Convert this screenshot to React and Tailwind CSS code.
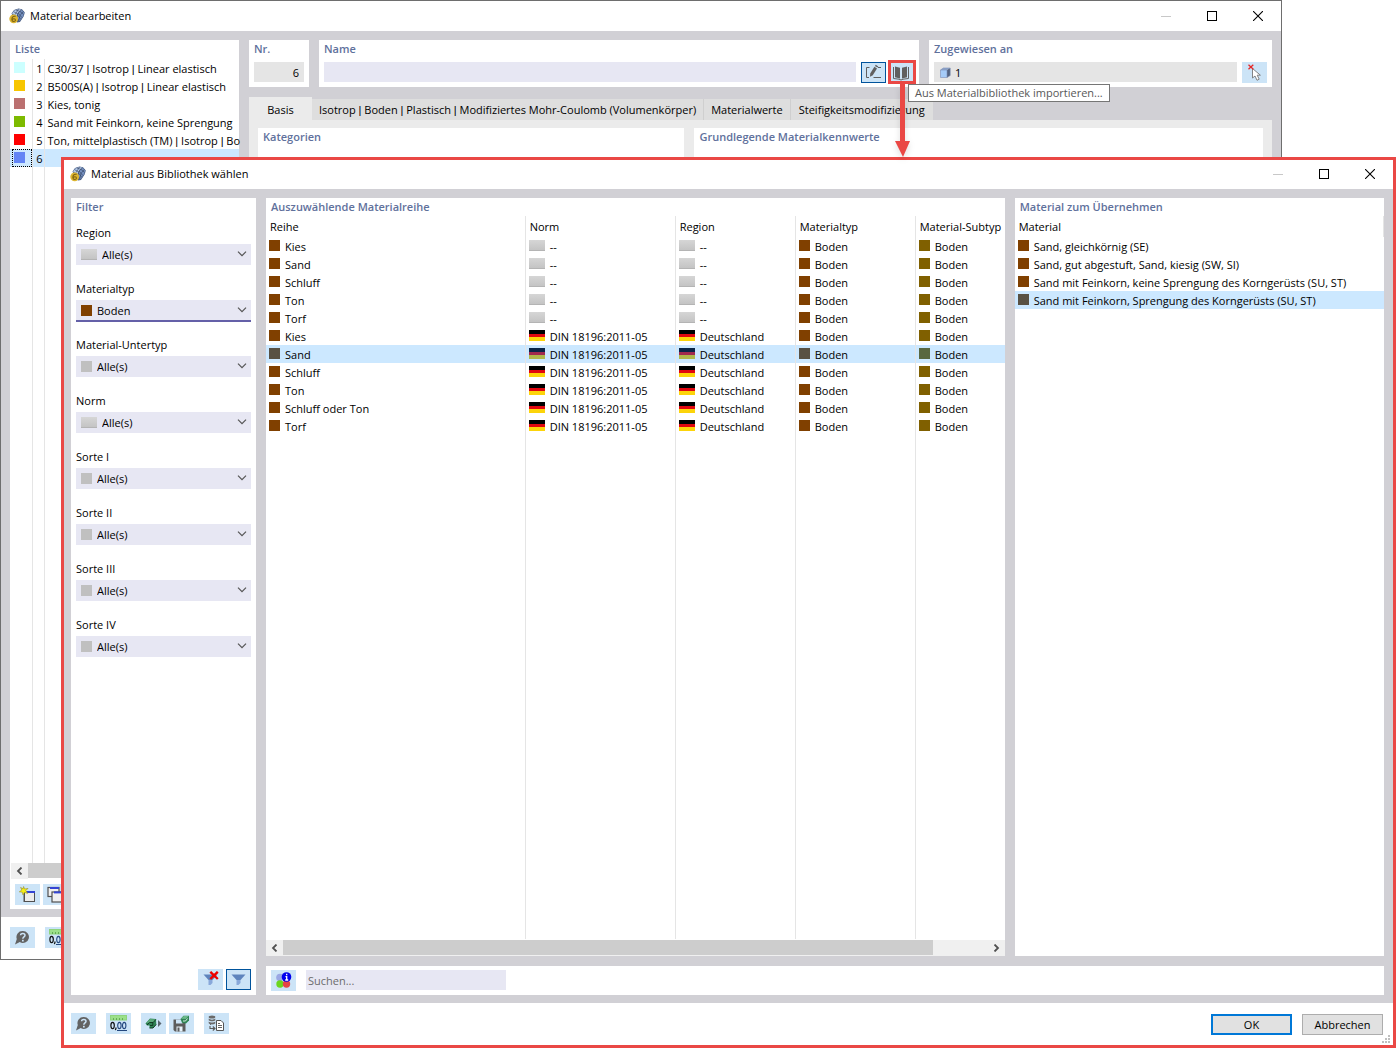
import React from "react";

const materials = [
  { nr: 1, color: "#ccffff", name: "C30/37 | Isotrop | Linear elastisch" },
  { nr: 2, color: "#f7c600", name: "B500S(A) | Isotrop | Linear elastisch" },
  { nr: 3, color: "#bb7070", name: "Kies, tonig" },
  { nr: 4, color: "#7dba00", name: "Sand mit Feinkorn, keine Sprengung" },
  { nr: 5, color: "#ff0000", name: "Ton, mittelplastisch (TM) | Isotrop | Bo" },
  { nr: 6, color: "#6384f5", name: "", selected: true },
];

const filters = [
  { label: "Region", value: "Alle(s)", icon: "wide" },
  { label: "Materialtyp", value: "Boden", icon: "soil", active: true },
  { label: "Material-Untertyp", value: "Alle(s)", icon: "square" },
  { label: "Norm", value: "Alle(s)", icon: "wide" },
  { label: "Sorte I", value: "Alle(s)", icon: "square" },
  { label: "Sorte II", value: "Alle(s)", icon: "square" },
  { label: "Sorte III", value: "Alle(s)", icon: "square" },
  { label: "Sorte IV", value: "Alle(s)", icon: "square" },
];

const series = [
  { name: "Kies" },
  { name: "Sand" },
  { name: "Schluff" },
  { name: "Ton" },
  { name: "Torf" },
  { name: "Kies", din: true },
  { name: "Sand", din: true, selected: true },
  { name: "Schluff", din: true },
  { name: "Ton", din: true },
  { name: "Schluff oder Ton", din: true },
  { name: "Torf", din: true },
];

const results = [
  { name: "Sand, gleichkörnig (SE)" },
  { name: "Sand, gut abgestuft, Sand, kiesig (SW, SI)" },
  { name: "Sand mit Feinkorn, keine Sprengung des Korngerüsts (SU, ST)" },
  { name: "Sand mit Feinkorn, Sprengung des Korngerüsts (SU, ST)", selected: true },
];

function AppIcon() {
  return (
    <svg width="16" height="16" viewBox="0 0 16 16" aria-hidden="true">
      <path d="M2.5 5.5 L5 2 L9.5 0.5 L13 1.2 L15.8 4.5 L14.6 8.5 L11 14 L8 14.5 L5 10 Z" fill="#4a5f86" />
      <path d="M3 5.5 L5.4 2.4 L9.6 1 L12.6 1.8 L9 5 L7.5 8.5 Z" fill="#b3c8e8" />
      <path d="M9 5 L12.6 1.8 L15.2 4.8 L14 8.3 L10.6 13 L8 9 Z" fill="#7590bf" />
      <path d="M4.6 3.7 L8.6 5.8 M6.6 2 L11 3.4 M9 5 L13 9.6 M11 3.4 L14.6 6.4 M8.4 7 L12 11.4 M9.6 1 L6 6.6 M12.6 1.8 L9 5 L8 9 M14.4 3.4 L11 7.4 L10 12" stroke="#33425f" strokeWidth="0.6" fill="none" />
      <circle cx="4.7" cy="10.8" r="4.4" fill="#dcb531" />
      <path d="M6.6 8.4 C4 7.6 2.8 9.6 2.9 11.6 C3 14 6.4 14 6.4 12 C6.4 10.4 4 10.4 3.2 11.7" stroke="#7d6210" strokeWidth="1.1" fill="none" />
    </svg>
  );
}

function TitleBar({ title }) {
  return (
    <header className="flex h-[30px] w-full shrink-0 items-center text-black">
      <AppIcon />
      <h1 className="ml-[5px] flex-1 truncate">{title}</h1>
      <div className="flex h-full">
        <button aria-label="Minimieren" className="flex w-[46px] items-center justify-center">
          <svg width="10" height="10"><path d="M0 5.5H10" stroke="#c8c8c8" /></svg>
        </button>
        <button aria-label="Maximieren" className="flex w-[46px] items-center justify-center">
          <svg width="10" height="10"><rect x="0.5" y="0.5" width="9" height="9" fill="none" stroke="#000" /></svg>
        </button>
        <button aria-label="Schließen" className="flex w-[46px] items-center justify-center">
          <svg width="10" height="10"><path d="M0 0L10 10M10 0L0 10" stroke="#000" strokeWidth="1.1" /></svg>
        </button>
      </div>
    </header>
  );
}

function PanelTitle({ children }) {
  return <h2 className="h-[18px] shrink-0 truncate px-[5px] font-semibold leading-[18px] text-[#5f719c]">{children}</h2>;
}

function Piped({ text }) {
  return text.split("|").map((part, i) => (
    <React.Fragment key={i}>
      {i > 0 && <span className="font-['Liberation_Sans',sans-serif]">|</span>}
      {part}
    </React.Fragment>
  ));
}

function IconButton({ label, active, children }) {
  return (
    <button
      aria-label={label}
      className={
        active
          ? "flex h-[21px] w-[25px] shrink-0 items-center justify-center border border-[#00539c] bg-[#cce4f7]"
          : "flex h-[21px] w-[25px] shrink-0 items-center justify-center bg-[#cce4f7]"
      }
    >
      {children}
    </button>
  );
}

function HelpIcon() {
  return (
    <svg width="17" height="16" viewBox="0 0 17 16">
      <path d="M8.6 1 A6 6 0 1 1 5.8 12.1 L1 14.6 L2.8 9 A6 6 0 0 1 8.6 1 Z" fill="#636363" />
      <path d="M6.6 5.2 C6.6 2.8 11 2.8 11 5.3 C11 7 8.8 6.8 8.8 8.8" stroke="#cce4f7" strokeWidth="1.5" fill="none" />
      <rect x="8" y="9.8" width="1.7" height="1.7" fill="#cce4f7" />
    </svg>
  );
}

function UnitsIcon() {
  return (
    <svg width="17" height="17" viewBox="0 0 17 17">
      <rect x="0.5" y="0.5" width="16" height="4.5" fill="#9be08a" stroke="#8ed47d" />
      <path d="M3.5 3V5M6.5 3V5M9.5 3V5M12.5 3V5" stroke="#5ea850" strokeWidth="0.9" />
      <ellipse cx="2.6" cy="10.5" rx="1.7" ry="3.1" fill="none" stroke="#111" strokeWidth="1.2" />
      <path d="M6.2 12.5L5.4 15.2" stroke="#111" strokeWidth="1.2" />
      <ellipse cx="9.4" cy="10.5" rx="1.7" ry="3.1" fill="none" stroke="#23477e" strokeWidth="1.1" />
      <ellipse cx="14.2" cy="10.5" rx="1.7" ry="3.1" fill="none" stroke="#23477e" strokeWidth="1.1" />
      <path d="M7 15.5H17" stroke="#23477e" />
    </svg>
  );
}

function NewIcon() {
  return (
    <svg width="17" height="17" viewBox="0 0 17 17">
      <rect x="5.5" y="6.5" width="10" height="9" fill="#ececec" stroke="#505050" />
      <rect x="5" y="5" width="11" height="2" fill="#3344d4" />
      <path d="M5 4.5V16" stroke="#505050" />
      <path d="M4.6 0.5L5.6 3L9 2.4L6.8 4.6L8.6 7.4L5.4 6.4L4 9L3.3 6.2L0.3 5.8L2.8 4L1.6 1.4L4 2.8Z" fill="#f5ee10" stroke="#9a8f28" strokeWidth="0.6" />
    </svg>
  );
}

function CopyIcon() {
  return (
    <svg width="17" height="17" viewBox="0 0 17 17">
      <rect x="1" y="1.5" width="11" height="9" fill="#f0f0f0" stroke="#505050" strokeWidth="1.2" />
      <rect x="3" y="1" width="9" height="2" fill="#3344d4" />
      <rect x="5" y="6" width="11" height="10" fill="#f0f0f0" stroke="#505050" strokeWidth="1.2" />
      <rect x="7" y="5.4" width="10" height="2" fill="#3344d4" />
    </svg>
  );
}

function EditIcon() {
  return (
    <svg width="17" height="17" viewBox="0 0 17 17">
      <path d="M4.5 3.5H1.5V13.5H4M8.5 13.5H16M13 3.5H16" stroke="#606060" fill="none" />
      <path d="M5.2 9.5L9.4 2.8L12 4.4L7.8 11.2L5 12.8Z" fill="#606060" />
      <path d="M9.9 2L10.8 0.8L13.3 2.4L12.5 3.6Z" fill="#606060" />
    </svg>
  );
}

function BookIcon() {
  return (
    <svg width="18" height="16" viewBox="0 0 18 16">
      <path d="M2 1.5L7 2.7V13.5L2 12.2Z M14 1.5L9 2.7V13.5L14 12.2Z" fill="#606060" />
      <path d="M0.5 2V13.5L6 14.2L8 15L10 14.2L15.5 13.5V2" stroke="#606060" fill="none" />
    </svg>
  );
}

function PickIcon() {
  return (
    <svg width="16" height="18" viewBox="0 0 16 18">
      <path d="M5.5 4.5V14L8 12L10 16.3L12.2 15.2L10.2 11.2H13.4Z" fill="#fff" stroke="#777" strokeWidth="0.9" />
      <path d="M1.5 0.8L6.3 5.2M6.3 0.8L1.5 5.2" stroke="#e62828" strokeWidth="1.3" />
    </svg>
  );
}

function CubeIcon() {
  return (
    <svg width="11" height="11" viewBox="0 0 11 11" aria-hidden="true">
      <path d="M0.5 3H7V10.5H0.5Z" fill="#a5cbf8" />
      <path d="M0.5 3L3.4 1H10.2L7 3Z" fill="#8fa5cc" />
      <path d="M7 3L10.2 1V8.5L7 10.5Z" fill="#53627f" />
      <path d="M0.5 3V10.5H7V3Z M0.5 3L3.4 1H10.2V8.5L7 10.5" fill="none" stroke="#7b8db5" strokeWidth="0.6" />
    </svg>
  );
}

function FunnelIcon({ clear }) {
  return (
    <svg width="17" height="17" viewBox="0 0 17 17">
      <path d="M1.5 3.5H15.5L10.5 9H6.5Z" fill="#5e84bd" />
      <path d="M6.5 9H10.5V12L8.5 14H6.5Z" fill="#88a8da" />
      {clear && <path d="M8.3 0.8L15.8 8M15.8 0.8L8.3 8" stroke="#ee0000" strokeWidth="2.4" />}
    </svg>
  );
}

function InfoIcon() {
  return (
    <svg width="17" height="17" viewBox="0 0 17 17">
      <circle cx="5" cy="5.5" r="3.8" fill="#9aa8e4" />
      <circle cx="5" cy="12" r="3.7" fill="#6bd61e" />
      <circle cx="11.5" cy="12" r="3.7" fill="#e64545" />
      <circle cx="11.5" cy="5" r="4.8" fill="#0000ee" />
      <path d="M11.7 1.8V3.2M10.5 4.7H11.7V8M10.2 8H13.2" stroke="#fff" strokeWidth="1.3" fill="none" />
    </svg>
  );
}

function ImportIcon() {
  return (
    <svg width="17" height="17" viewBox="0 0 17 17">
      <path d="M0.5 8.5L5 3.5L11 4L11.3 9.5L8 13H4.5V10.5H2Z" fill="#2f8355" />
      <path d="M1 8L5.2 4L10.6 4.5L8 7.8H4Z" fill="#5aa97a" />
      <path d="M2 10L4.5 7.5H8.2L10.8 4.5M5 10.5H7.8V7.8M4.5 13H8L11.2 9.5" stroke="#123c25" fill="none" />
      <path d="M13 5L16.5 8.5L13 12Z" fill="#5a6670" />
    </svg>
  );
}

function SaveIcon() {
  return (
    <svg width="17" height="17" viewBox="0 0 17 17">
      <path d="M0.5 4.5H11L12.5 6V16.5H2L0.5 15Z" fill="#5c5c5c" />
      <rect x="3" y="4.5" width="6.5" height="4" fill="#cce4f7" />
      <rect x="3.5" y="11.5" width="6" height="5" fill="#e6f1fa" />
      <rect x="4.5" y="12.5" width="2" height="4" fill="#5c5c5c" />
      <path d="M7.5 4L10.5 0.8H16V5.5L13 8.5L9 7.8Z" fill="#2f8355" />
      <path d="M8 3.8L10.8 1.1H15.5L13 4Z" fill="#6bb98a" />
      <path d="M10 6L12.5 6L14.5 3.5" stroke="#d5efe0" fill="none" />
    </svg>
  );
}

function DatabaseIcon() {
  return (
    <svg width="17" height="17" viewBox="0 0 17 17">
      <ellipse cx="4" cy="2" rx="3.3" ry="1.5" fill="#6a6a6a" />
      <path d="M0.7 3.6C2 5 6 5 7.3 3.6V5.2C6 6.6 2 6.6 0.7 5.2ZM0.7 6.4C2 7.8 6 7.8 7.3 6.4V8.2C6 9.8 2 9.8 0.7 8.2Z" fill="#6a6a6a" />
      <path d="M2 11V13.5H6.5M4.8 11.5L7 13.5L4.8 15.5" stroke="#5a5a5a" strokeWidth="1.1" fill="none" />
      <path d="M8.5 5.5H13L15.5 8V15.5H8.5Z" fill="#fff" stroke="#555" />
      <path d="M10 8.5H12M10 10.5H14M10 12.5H14" stroke="#555" strokeWidth="0.9" />
    </svg>
  );
}

function Swatch({ color }) {
  return <span className="inline-block size-[11px] shrink-0" style={{ backgroundColor: color }} />;
}

function BlankFlag() {
  return <span className="inline-block h-[11px] w-4 shrink-0 border-b border-[#b4b4b4] bg-linear-to-b from-[#d6d6d6] to-[#c4c4c4]" />;
}

function GermanFlag({ muted }) {
  return (
    <span className="flex h-[11px] w-4 shrink-0 flex-col">
      <span className={muted ? "flex-1 bg-[#0a2547]" : "flex-1 bg-black"} />
      <span className={muted ? "flex-1 bg-[#a02a4e]" : "flex-1 bg-[#e1060f]"} />
      <span className={muted ? "flex-1 bg-[#b0b84a]" : "flex-1 bg-[#fcd40a]"} />
    </span>
  );
}

function Entry({ icon, children }) {
  return (
    <div className="flex h-[18px] gap-[5px] overflow-hidden pl-[3px] whitespace-nowrap">
      <span className="flex pt-[3px]">{icon}</span>
      <span className="leading-5">{children}</span>
    </div>
  );
}

function Arrow({ right }) {
  return (
    <button
      aria-label={right ? "Nach rechts" : "Nach links"}
      className="flex h-4 w-[17px] shrink-0 items-center justify-center bg-[#f0f0f0]"
    >
      <svg width="7" height="8" viewBox="0 0 7 8">
        <path d={right ? "M1.5 0.5L5 4L1.5 7.5" : "M5.5 0.5L2 4L5.5 7.5"} fill="none" stroke="#505050" strokeWidth="1.8" />
      </svg>
    </button>
  );
}

function FilterField({ label, value, icon, active }) {
  const id = "filter-" + label.replace(/\s/g, "-");
  return (
    <div className="mb-[15px]">
      <label htmlFor={id} className="block h-5 leading-[18px]">{label}</label>
      <div className="relative h-[21px]">
        <select
          id={id}
          defaultValue={value}
          className={
            (active ? "h-[22px] border-b-2 border-[#6460a8] pt-px " : "h-[21px] ") +
            (icon === "wide" ? "pl-[26px] " : "pl-[21px] ") +
            "block w-full appearance-none bg-[#e7e7f3] pr-5 outline-none"
          }
        >
          <option>{value}</option>
        </select>
        <span className="pointer-events-none absolute inset-y-0 left-[5px] flex items-center">
          {icon === "wide" ? <BlankFlag /> : <Swatch color={icon === "soil" ? "#804000" : "#c0c0c0"} />}
        </span>
        <svg className="pointer-events-none absolute top-[7px] right-1" width="10" height="6" viewBox="0 0 10 6" aria-hidden="true">
          <path d="M1 0.7L5 4.7L9 0.7" fill="none" stroke="#555" strokeWidth="1.2" />
        </svg>
      </div>
    </div>
  );
}

function EditWindow() {
  return (
    <section className="absolute top-0 right-[118px] bottom-[90px] left-0 flex flex-col border border-[#6e6e6e] bg-white">
      <div className="pl-2"><TitleBar title="Material bearbeiten" /></div>
      <div className="flex min-h-0 flex-1 gap-[10px] bg-[#d1d0d5] px-[9px] pt-[9px] pb-2">
        <div className="flex w-[229px] shrink-0 flex-col bg-white">
          <PanelTitle>Liste</PanelTitle>
          <div className="mt-px min-h-0 flex-1">
            <table className="h-full w-full table-fixed border-collapse">
              <colgroup>
                <col className="w-[22px]" />
                <col className="w-3" />
                <col />
              </colgroup>
              <tbody>
                {materials.map((m) => (
                  <tr key={m.nr} className={m.selected ? "h-[18px] bg-[#cce8ff]" : "h-[18px]"}>
                    <td className="p-0">
                      <div className={m.selected ? "ml-[2px] h-[18px] border border-dotted border-black pt-[2px] pl-px" : "h-[18px] pt-[3px] pl-1"}>
                        <span className="block size-[11px]" style={{ backgroundColor: m.color }} />
                      </div>
                    </td>
                    <td className="border-l border-[#e5e5e5] p-0">
                      <div className="h-[18px] pr-px text-right leading-5">{m.nr}</div>
                    </td>
                    <td className="border-l border-[#e5e5e5] p-0">
                      <div className="h-[18px] pl-[3px] leading-5 whitespace-nowrap"><Piped text={m.name} /></div>
                    </td>
                  </tr>
                ))}
                <tr>
                  <td className="p-0" />
                  <td className="border-l border-[#e5e5e5] p-0" />
                  <td className="border-l border-[#e5e5e5] p-0" />
                </tr>
              </tbody>
            </table>
          </div>
          <div className="flex pl-px">
            <Arrow />
            <div className="h-[15px] flex-1 bg-[#cdcdcd]" />
          </div>
          <div className="flex gap-[3px] px-[5px] pt-[5px] pb-1">
            <IconButton label="Neu"><NewIcon /></IconButton>
            <IconButton label="Kopieren"><CopyIcon /></IconButton>
          </div>
        </div>

        <div className="flex min-w-0 flex-1 flex-col">
          <div className="flex gap-[10px]">
            <div className="w-[60px] bg-white pb-[5px]">
              <PanelTitle><label htmlFor="nr">Nr.</label></PanelTitle>
              <div className="px-[5px] pt-1">
                <input id="nr" readOnly defaultValue="6" className="block h-5 w-full bg-[#e5e5e5] pr-[5px] text-right outline-none" />
              </div>
            </div>
            <div className="min-w-0 flex-1 bg-white">
              <PanelTitle><label htmlFor="name">Name</label></PanelTitle>
              <div className="flex px-[5px] pt-1">
                <input id="name" className="block h-5 min-w-0 flex-1 bg-[#e7e7f3] px-1 outline-none" />
                <span className="ml-[5px]"><IconButton label="Name bearbeiten" active><EditIcon /></IconButton></span>
                <span className="relative ml-[3px]">
                  <IconButton label="Aus Materialbibliothek importieren"><BookIcon /></IconButton>
                  <span className="absolute -top-[2px] -left-px h-6 w-7 border-3 border-[#ea4845]" />
                  <svg className="absolute top-[22px] left-1 z-10 drop-shadow-md" width="18" height="74" viewBox="0 0 18 74" aria-hidden="true">
                    <path d="M7 0H12V57H17L10 73L2 57H7Z" fill="#ea4845" />
                  </svg>
                  <span role="tooltip" className="absolute top-[22px] left-[19px] flex h-[18px] items-center border border-[#767676] bg-white px-[6px] whitespace-nowrap text-[#575757]">
                    Aus Materialbibliothek importieren...
                  </span>
                </span>
              </div>
            </div>
            <div className="w-[343px] bg-white">
              <PanelTitle>Zugewiesen an</PanelTitle>
              <div className="flex gap-[5px] px-[5px] pt-1">
                <div className="flex h-5 flex-1 items-center gap-1 bg-[#e5e5e5] pl-[6px]">
                  <CubeIcon />
                  <span className="pt-[2px]">1</span>
                </div>
                <IconButton label="Auswählen"><PickIcon /></IconButton>
              </div>
            </div>
          </div>

          <div className="mt-[10px] flex items-end" role="tablist">
            <button role="tab" aria-selected="true" className="h-[23px] w-[63px] bg-[#ebebeb] pt-[3px]">Basis</button>
            <button role="tab" className="h-[21px] border-r border-[#cfcfcf] bg-[#dedede] px-[7px]"><Piped text="Isotrop | Boden | Plastisch | Modifiziertes Mohr-Coulomb (Volumenkörper)" /></button>
            <button role="tab" className="h-[21px] border-r border-[#cfcfcf] bg-[#dedede] px-[7px]">Materialwerte</button>
            <button role="tab" className="h-[21px] bg-[#dedede] px-2">Steifigkeitsmodifizierung</button>
          </div>
          <div className="flex min-h-0 flex-1 gap-[10px] bg-[#ebebeb] px-[9px] pt-2 pb-2">
            <div className="flex-[3] bg-white"><PanelTitle>Kategorien</PanelTitle></div>
            <div className="flex-[4] bg-white"><PanelTitle>Grundlegende Materialkennwerte</PanelTitle></div>
          </div>
        </div>
      </div>
      <footer className="flex h-[42px] shrink-0 gap-[10px] pt-[10px] pl-[9px]">
        <IconButton label="Hilfe"><HelpIcon /></IconButton>
        <IconButton label="Einheiten"><UnitsIcon /></IconButton>
      </footer>
    </section>
  );
}

const line = "border-l border-[#e5e5e5] p-0";

function SeriesTable() {
  return (
    <table className="h-full w-full table-fixed border-separate border-spacing-0">
      <colgroup>
        <col />
        <col className="w-[150px]" />
        <col className="w-[120px]" />
        <col className="w-[120px]" />
        <col className="w-[90px]" />
      </colgroup>
      <thead>
        <tr className="h-[21px] text-left">
          <th className="p-0 pl-1 font-normal">Reihe</th>
          <th className="border-l border-[#e5e5e5] p-0 pl-1 font-normal">Norm</th>
          <th className="border-l border-[#e5e5e5] p-0 pl-1 font-normal">Region</th>
          <th className="border-l border-[#e5e5e5] p-0 pl-1 font-normal">Materialtyp</th>
          <th className="border-l border-[#e5e5e5] p-0 pl-1 font-normal whitespace-nowrap">Material-Subtyp</th>
        </tr>
      </thead>
      <tbody>
        {series.map((s, i) => {
          const soil = s.selected ? "#595143" : "#804000";
          const sub = s.selected ? "#596840" : "#806000";
          const flag = s.din ? <GermanFlag muted={s.selected} /> : <BlankFlag />;
          return (
            <tr key={i} className={s.selected ? "h-[18px] bg-[#cce8ff]" : "h-[18px]"}>
              <td className="p-0"><Entry icon={<Swatch color={soil} />}>{s.name}</Entry></td>
              <td className={line}><Entry icon={flag}>{s.din ? "DIN 18196:2011-05" : "--"}</Entry></td>
              <td className={line}><Entry icon={flag}>{s.din ? "Deutschland" : "--"}</Entry></td>
              <td className={line}><Entry icon={<Swatch color={soil} />}>Boden</Entry></td>
              <td className={line}><Entry icon={<Swatch color={sub} />}>Boden</Entry></td>
            </tr>
          );
        })}
        <tr>
          <td className="p-0" />
          <td className={line} />
          <td className={line} />
          <td className={line} />
          <td className={line} />
        </tr>
      </tbody>
    </table>
  );
}

function LibraryDialog() {
  return (
    <section role="dialog" aria-label="Material aus Bibliothek wählen" className="absolute top-[157px] right-1 bottom-[2px] left-[61px] flex flex-col border-3 border-[#ea4845] bg-white">
      <div className="-mt-px pl-[6px]"><TitleBar title="Material aus Bibliothek wählen" /></div>
      <div className="flex min-h-0 flex-1 gap-[10px] bg-[#d1d0d5] pt-[9px] pr-[9px] pb-2 pl-[7px]">
        <div className="flex w-[185px] shrink-0 flex-col bg-white">
          <PanelTitle>Filter</PanelTitle>
          <div className="flex-1 px-[5px] pt-2">
            {filters.map((f) => <FilterField key={f.label} {...f} />)}
          </div>
          <div className="flex justify-end gap-[3px] px-[5px] pb-[5px]">
            <IconButton label="Filter löschen"><FunnelIcon clear /></IconButton>
            <IconButton label="Filter" active><FunnelIcon /></IconButton>
          </div>
        </div>
        <div className="flex min-w-0 flex-1 flex-col gap-[10px]">
          <div className="flex min-h-0 flex-1 gap-[10px]">
            <div className="flex min-w-0 flex-[2] flex-col bg-white">
              <PanelTitle>Auszuwählende Materialreihe</PanelTitle>
              <div className="min-h-0 flex-1"><SeriesTable /></div>
              <div className="mt-px flex bg-[#f0f0f0]">
                <Arrow />
                <div className="h-[15px] flex-[12] bg-[#cdcdcd]" />
                <div className="flex-[1]" />
                <Arrow right />
              </div>
            </div>
            <div className="flex min-w-0 flex-[1] flex-col bg-white">
              <PanelTitle>Material zum Übernehmen</PanelTitle>
              <table className="w-full border-separate border-spacing-0">
                <thead>
                  <tr className="h-[21px] text-left"><th className="border-r border-[#e5e5e5] p-0 pl-1 font-normal">Material</th></tr>
                </thead>
                <tbody>
                  {results.map((r) => (
                    <tr key={r.name} className={r.selected ? "h-[18px] bg-[#cce8ff]" : "h-[18px]"}>
                      <td className="p-0"><Entry icon={<Swatch color={r.selected ? "#595143" : "#804000"} />}>{r.name}</Entry></td>
                    </tr>
                  ))}
                </tbody>
              </table>
            </div>
          </div>
          <div className="flex gap-[10px] bg-white px-[5px] py-1">
            <IconButton label="Info"><InfoIcon /></IconButton>
            <input aria-label="Suchen" placeholder="Suchen..." className="h-5 w-[200px] bg-[#e7e7f3] px-[2px] outline-none placeholder:text-[#6b6b6b]" />
          </div>
        </div>
      </div>
      <footer className="relative flex h-[42px] shrink-0 items-start pt-[10px] pr-[10px] pl-[7px]">
        <div className="flex gap-[10px]">
          <IconButton label="Hilfe"><HelpIcon /></IconButton>
          <IconButton label="Einheiten"><UnitsIcon /></IconButton>
          <div className="flex gap-[3px]">
            <IconButton label="Importieren"><ImportIcon /></IconButton>
            <IconButton label="Speichern"><SaveIcon /></IconButton>
          </div>
          <IconButton label="Datenbank"><DatabaseIcon /></IconButton>
        </div>
        <div className="mt-px ml-auto flex gap-[10px]">
          <button className="h-[21px] w-[81px] border-2 border-[#0078d7] bg-[#e1e1e1]">OK</button>
          <button className="h-[21px] w-[81px] border border-[#adadad] bg-[#e1e1e1]">Abbrechen</button>
        </div>
        <svg className="absolute right-[3px] bottom-[2px]" width="8" height="8" viewBox="0 0 8 8" aria-hidden="true">
          <path d="M6 0h2v2h-2zM3 3h2v2h-2zM6 3h2v2h-2zM0 6h2v2h-2zM3 6h2v2h-2zM6 6h2v2h-2z" fill="#bfbfbf" />
        </svg>
      </footer>
    </section>
  );
}

export default function App() {
  return (
    <main className="relative h-screen overflow-hidden bg-white font-['Open_Sans','Noto_Sans',sans-serif] text-[11px] leading-[18px] text-black">
      <EditWindow />
      <LibraryDialog />
    </main>
  );
}
